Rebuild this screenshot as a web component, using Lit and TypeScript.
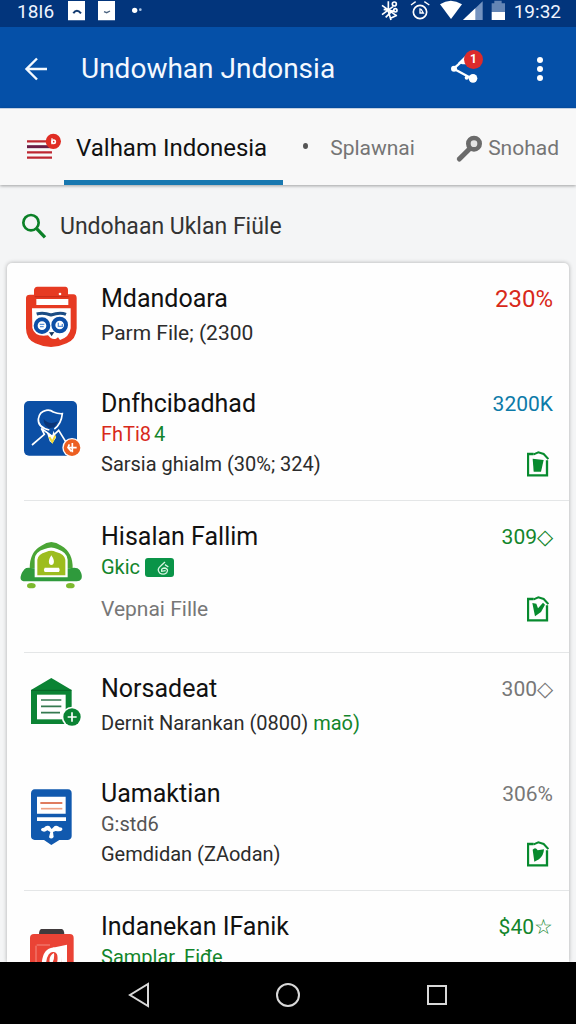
import { LitElement, html, css, svg, nothing, TemplateResult } from "lit";
import { customElement, property } from "lit/decorators.js";
import { classMap } from "lit/directives/class-map.js";

const art: Record<string, TemplateResult> = {
  owl: svg`<svg class="art" viewBox="72 72 171 192" aria-hidden="true">
    <path fill="#e63a22" d="M112 80H196Q204 81 204 90V103H220Q230 104 230 114V205Q229 238 200 250Q153 272 106 250Q78 238 78 205V114Q78 104 90 104H102V90Q103 81 112 80Z"/>
    <path fill="#fff" d="M109 117H205V135H109ZM96 145H212V205Q208 232 180 240L174 232L168 236Q160 238 152 234L144 226Q104 232 97 204Z"/>
    <path fill="#c92d1a" d="M104 108h102v4h-102z"/>
    <circle cx="180" cy="102" r="4" fill="#fff"/>
    <path d="M110 162Q130 156 153 165Q180 155 198 163" fill="none" stroke="#1c4d84" stroke-width="9"/>
    <circle cx="126" cy="197" r="19" fill="#fff" stroke="#0d4fa6" stroke-width="12"/>
    <circle cx="179" cy="195" r="19" fill="#fff" stroke="#0d4fa6" stroke-width="12"/>
    <path d="M119 193h14M120 200h11M175 188v11h12v-7" fill="none" stroke="#5f93d6" stroke-width="4"/>
    <path d="M147 217L155 229L163 216" fill="#17375e"/>
  </svg>`,
  person: svg`<svg class="art" viewBox="72 390 171 192" aria-hidden="true">
    <rect x="72" y="426" width="159" height="164" rx="15" fill="#0b4fa5"/>
    <path d="M148 513Q113 505 115 480Q118 458 138 454Q150 451 160 459Q174 465 187 464Q184 495 163 510" fill="none" stroke="#fff" stroke-width="5"/>
    <path d="M131 480Q148 500 174 487L163 505L146 508Q130 498 131 480Z" fill="#0a3476"/>
    <path d="M96 558L133 526L124 508L157 532L176 514L197 548" fill="none" stroke="#fff" stroke-width="5"/>
    <path d="M139 516L156 532L161 515L168 536L157 553L149 547Z" fill="#fff"/>
    <path d="M148 534L157 549L166 530" fill="none" stroke="#f0d832" stroke-width="6"/>
    <circle cx="216" cy="566" r="29" fill="#fff"/><circle cx="216" cy="566" r="25" fill="#ec5f21"/>
    <path d="M204 566H230M217 552V580M208 556L204 566L214 577" fill="none" stroke="#fff" stroke-width="5"/>
  </svg>`,
  dome: svg`<svg class="art" viewBox="72 99 171 192" aria-hidden="true">
    <path fill="#4aa535" d="M89 238Q89 188 124 170Q154 148 184 170Q219 190 218 238Z"/>
    <path fill="#2f9a3c" d="M74 240Q80 233 100 238H208Q232 233 239 243Q249 260 244 270Q240 277 230 277H76Q64 277 62 270Q60 256 74 240Z"/>
    <path fill="#fff" d="M104 265V210Q106 188 134 180Q154 171 172 180Q202 190 203 212V265Z"/>
    <path fill="#9dbd1f" d="M112 259V212Q114 196 138 189Q154 182 168 189Q194 196 196 212V259Z"/>
    <path fill="#fff" d="M154 199Q166 216 160 225Q154 231 148 225Q143 216 154 199ZM134 236H177Q181 242 177 249H134Q129 243 134 236Z"/>
    <ellipse cx="94" cy="290" rx="13" ry="8" fill="#7db92e"/><ellipse cx="211" cy="290" rx="13" ry="8" fill="#7db92e"/>
  </svg>`,
  house: svg`<svg class="art" viewBox="72 72 171 192" aria-hidden="true">
    <path fill="#0b8334" d="M93 120L154 84L215 120V222H93Z"/>
    <path d="M94 121H214" stroke="#086327" stroke-width="3"/>
    <rect x="111" y="134" width="86" height="74" fill="#fff"/>
    <path d="M123 150H184M123 169H184M123 188H180" stroke="#357a50" stroke-width="5"/>
    <circle cx="216" cy="201" r="31" fill="#fff"/><circle cx="216" cy="201" r="26" fill="#0b8334"/>
    <path d="M203 201H230M216 187V215" stroke="#fff" stroke-width="5"/>
  </svg>`,
  badge: svg`<svg class="art" viewBox="72 60 171 192" aria-hidden="true">
    <path fill="#1159ae" d="M104 91H204Q215 92 215 103V232Q214 242 204 243H178L154 258L132 243H104Q93 242 93 232V103Q94 92 104 91Z"/>
    <path fill="#fff" d="M111 113H197V164H111ZM111 175H198V186H111Z"/>
    <path d="M121 132H187" stroke="#d9623f" stroke-width="5"/><path d="M123 149H187" stroke="#efa184" stroke-width="5"/>
    <path fill="#fff" d="M123 214Q122 207 132 206Q138 198 148 201L155 210L164 201Q174 199 178 205Q188 205 187 212Q184 219 167 216L159 219L161 234Q154 243 147 235L151 219L142 214Q132 222 123 214Z"/>
  </svg>`,
  jar: svg`<svg class="art" viewBox="72 99 171 192" aria-hidden="true">
    <path fill="#403a3c" d="M124 150H185Q193 152 193 168H117Q117 152 124 150Z"/>
    <rect x="90" y="165" width="131" height="150" rx="12" fill="#ea4335"/>
    <path d="M108 200V250M110 198H150" stroke="#f48a80" stroke-width="3"/>
    <path d="M132 250Q136 214 160 212Q184 214 178 250" fill="none" stroke="#fff" stroke-width="13"/>
    <path fill="#fff" d="M158 206L201 197V252H184Q188 220 158 206Z"/>
    <path d="M149 250Q146 230 162 222Q164 238 158 250Z" fill="#fff"/>
  </svg>`,
};

const mark: Record<string, TemplateResult> = {
  cup: svg`<path fill="#078a2e" d="M281 587L314 591L306 626H284Z"/>`,
  check: svg`<path fill="#078a2e" d="M280 585L292 587L297 601L312 584L318 590L306 612L288 625Z"/>`,
  heart: svg`<path fill="#078a2e" d="M281 590Q289 580 296 592L315 589Q314 608 300 619L286 626Z"/>`,
};

interface Item {
  art: string;
  title: string;
  lines: TemplateResult[];
  value: string;
  tone: string;
  mark?: string;
  divided?: boolean;
  spaced?: boolean;
}

const items: Item[] = [
  { art: "owl", title: "Mdandoara", lines: [html`<p class="lead">Parm File; (2300</p>`], value: "230%", tone: "red large" },
  {
    art: "person", title: "Dnfhcibadhad",
    lines: [html`<p class="tag"><span class="red">FhTi8</span><span class="green">4</span></p>`, html`<p>Sarsia ghialm (30%; 324)</p>`],
    value: "3200K", tone: "blue", mark: "cup", divided: true,
  },
  {
    art: "dome", title: "Hisalan Fallim",
    lines: [
      html`<p class="tag green">Gkic
        <svg class="chip" viewBox="0 0 87 57" aria-hidden="true"><rect width="87" height="57" rx="9" fill="#0a9448"/>
          <path d="M60 12L47 24Q34 34 44 45Q55 52 65 44Q72 34 60 30Q48 30 50 40L62 38M60 20L70 27" fill="none" stroke="#d8f5e2" stroke-width="4"/></svg></p>`,
      html`<p class="lead grey">Vepnai Fille</p>`,
    ],
    value: "309◇", tone: "green", mark: "check", divided: true, spaced: true,
  },
  { art: "house", title: "Norsadeat", lines: [html`<p>Dernit Narankan (0800) <span class="green">maō)</span></p>`], value: "300◇", tone: "grey" },
  {
    art: "badge", title: "Uamaktian",
    lines: [html`<p class="tag dim">G:std6</p>`, html`<p>Gemdidan (ZAodan)</p>`],
    value: "306%", tone: "grey", mark: "heart", divided: true,
  },
  { art: "jar", title: "Indanekan IFanik", lines: [html`<p class="tag green">Samplar. Fiđe</p>`], value: "$40☆", tone: "green" },
];

@customElement("file-row")
class FileRow extends LitElement {
  @property({ attribute: false }) item!: Item;

  static styles = css`
    :host { display: block; }
    .row { display: flex; gap: 20px; margin-left: 17px; padding: 21px 16px 21px 0; }
    .row.divided { border-bottom: 1px solid #e4e6e7; }
    .row.spaced { padding-bottom: 28px; }
    .row.pair { padding-bottom: 20px; }
    .art { flex: none; width: 57px; height: 64px; overflow: visible; }
    .body { flex: 1; min-width: 0; white-space: nowrap; }
    h2, p { margin: 0; font-weight: 400; line-height: 30px; }
    h2 { font-size: 25px; color: #111; }
    p { font-size: 20px; color: #2c2c2c; }
    p.lead { font-size: 21px; }
    .pair p { margin-top: 4px; }
    .spaced p:last-child { margin-top: 12px; }
    .tag { display: flex; align-items: center; gap: 3px; }
    .side { display: flex; flex-direction: column; align-items: flex-end; justify-content: space-between; }
    .value { font-size: 21px; line-height: 30px; }
    .value.large { font-size: 24px; }
    .file { display: block; width: 22px; height: 30px; margin-right: 4px; padding: 0; border: 0; background: none; }
    .file svg { display: block; width: 22px; height: 30px; }
    .chip { width: 29px; height: 19px; margin-left: 2px; }
    .red { color: #d8291a; }
    .blue { color: #0d7aa8; }
    p.green, .green { color: #12852b; }
    p.grey, .grey { color: #777; }
    p.dim { color: #555; }
  `;

  render() {
    const it = this.item;
    return html`<div class=${classMap({ row: true, divided: !!it.divided, spaced: !!it.spaced, pair: it.lines.length === 1 && it.art !== "jar" })}>
      ${art[it.art]}
      <div class="body"><h2>${it.title}</h2>${it.lines}</div>
      <div class="side">
        <span class="value ${it.tone}">${it.value}</span>
        ${it.mark
          ? html`<button class="file" aria-label="Open file"><svg viewBox="264 558 66 90" aria-hidden="true">
              <path d="M284 573H267V637H324V592" fill="none" stroke="#078a2e" stroke-width="7"/>
              <path d="M284 574L298 568L314 573L328 588" fill="none" stroke="#078a2e" stroke-width="6"/>
              ${mark[it.mark]}</svg></button>`
          : nothing}
      </div>
    </div>`;
  }
}

@customElement("app-root")
class AppRoot extends LitElement {
  static styles = css`
    :host {
      display: flex; flex-direction: column; height: 100vh; overflow: hidden;
      font-family: Roboto, "Liberation Sans", sans-serif; background: #f4f5f6; color: #111;
    }
    button { font: inherit; color: inherit; background: none; border: 0; padding: 0; margin: 0; }
    svg { display: block; overflow: visible; }
    .status {
      flex: none; display: flex; justify-content: space-between; height: 27px; padding: 0 15px 0 17px;
      background: #02357c; color: #eef4ff; font-size: 19px; line-height: 24px;
    }
    .group { display: flex; }
    .left-icons { width: 75px; height: 24px; margin-left: 14px; }
    .right-icons { width: 126px; height: 24px; margin-right: 7px; }
    .bar { flex: none; display: flex; align-items: center; height: 81px; padding: 2px 24px 0; box-sizing: border-box; background: #0550a8; color: #f4f9ff; }
    .bar h1 { flex: 1; margin: 0 0 0 33px; font-size: 28px; line-height: 40px; font-weight: 400; white-space: nowrap; }
    .back { width: 24px; height: 24px; }
    .share { position: relative; width: 28px; height: 30px; margin-right: 49px; }
    .count { position: absolute; top: -4px; right: -4px; width: 19px; height: 19px; border-radius: 50%; background: #dc2b2b; color: #fff; font-size: 12px; line-height: 19px; text-align: center; font-weight: 700; }
    .more { width: 24px; height: 30px; }
    .more svg { margin: 0 auto; }
    .tabs { flex: none; display: flex; height: 77px; padding: 0 17px 0 26px; box-sizing: border-box; background: #f8f8f8; border-top: 1px solid #c3d0e2; box-shadow: 0 1px 3px rgba(0, 0, 0, 0.35); white-space: nowrap; }
    .tab { display: flex; align-items: center; height: 76px; padding-top: 2px; box-sizing: border-box; font-size: 21px; color: #757575; }
    .tab.active { font-size: 24px; color: #111; padding: 6px 16px 0 12px; border-bottom: 5px solid #1878b0; }
    .menu { width: 38px; padding: 0; }
    .dot { width: 5px; height: 6px; margin: 34px 22px 0 20px; border-radius: 50%; background: #555; }
    .tab.last { margin-left: auto; gap: 6px; }
    .search { flex: none; display: flex; align-items: center; gap: 14px; height: 78px; padding: 3px 22px 0; box-sizing: border-box; }
    .search input { flex: 1; min-width: 0; padding: 2px 0 0; border: 0; outline: 0; background: none; font: 23px/32px Roboto, "Liberation Sans", sans-serif; color: #333; }
    .list { flex: 1; min-height: 0; overflow: hidden; margin: 0 7px; background: #fefefe; border-radius: 5px 5px 0 0; box-shadow: 0 0 4px rgba(0, 0, 0, 0.3); }
    .nav { flex: none; position: relative; display: flex; justify-content: space-around; align-items: center; height: 62px; padding: 3px 64px 0; box-sizing: border-box; background: #000; }
    .nav button { width: 48px; height: 48px; display: grid; place-items: center; }
  `;

  render() {
    return html`
      <div class="status">
        <div class="group">
          <span>18I6</span>
          <svg class="left-icons" viewBox="204 0 225 72" aria-hidden="true">
            <path fill="#fff" d="M204 3H255V61H204ZM294 3H345V61H294Z"/>
            <path d="M220 40Q230 24 243 40" fill="none" stroke="#123a70" stroke-width="6"/>
            <path d="M312 35L320 38L330 33" fill="none" stroke="#4b6480" stroke-width="4"/>
            <circle cx="404" cy="31" r="8" fill="#fff"/><circle cx="421" cy="29" r="4" fill="#aac4e4"/>
          </svg>
        </div>
        <div class="group">
          <svg class="right-icons" viewBox="282 0 378 72" aria-hidden="true">
            <g fill="none" stroke="#fff" stroke-width="5">
              <path d="M285 16L327 46M285 44L318 20M304 4V34L312 60M290 28L322 34M296 52L314 34"/>
              <circle cx="322" cy="12" r="6"/><circle cx="325" cy="31" r="5"/><path d="M312 54L330 46"/>
              <circle cx="399" cy="36" r="20"/><path d="M372 15L386 5M412 5L427 15M399 25V39H409L402 27" stroke-width="4"/>
            </g>
            <path fill="#fff" d="M459 13Q491 -8 525 13L492 57Z"/>
            <path fill="#7593c0" d="M587 4V60H528Z"/><path fill="#fff" d="M565 25V60H528Z"/>
            <path fill="#6485b4" d="M622 2H644V10H654V36H614V10H622Z"/><path fill="#fff" d="M614 36H654V60H614Z"/>
          </svg>
          <span>19:32</span>
        </div>
      </div>
      <header class="bar">
        <button class="back" aria-label="Back"><svg width="24" height="24" viewBox="0 0 24 24" fill="none" stroke="#f4f9ff" stroke-width="2.4"><path d="M23 12H3M13 1.500L2.500 12L13 22.500"/></svg></button>
        <h1>Undowhan Jndonsia</h1>
        <button class="share" aria-label="Share">
          <svg width="28" height="30" viewBox="489 165 84 90" fill="#fff" aria-hidden="true">
            <path d="M497 209L532 178M497 209L554 240" stroke="#fff" stroke-width="7"/>
            <circle cx="498" cy="209" r="9"/><circle cx="555" cy="238" r="13"/><circle cx="536" cy="236" r="6"/>
            <path d="M510 192L534 168L540 196L524 196Z"/>
          </svg>
          <span class="count">1</span>
        </button>
        <button class="more" aria-label="More options"><svg width="8" height="26" viewBox="0 0 8 26" fill="#fff"><circle cx="4" cy="4" r="3"/><circle cx="4" cy="13" r="3"/><circle cx="4" cy="22" r="3"/></svg></button>
      </header>
      <nav class="tabs">
        <button class="tab menu" aria-label="Menu">
          <svg width="36" height="30" viewBox="78 58 108 90" aria-hidden="true">
            <path d="M81 86H156M81 119H156M81 135H156" stroke="#bd2630" stroke-width="7"/>
            <path d="M81 102H150" stroke="#6a1c46" stroke-width="9"/>
            <circle cx="160" cy="86" r="23" fill="#e02d24"/>
            <circle cx="161" cy="87" r="5" fill="none" stroke="#fff" stroke-width="5"/><path d="M156 77v18" stroke="#fff" stroke-width="4"/>
          </svg>
        </button>
        <button class="tab active">Valham Indonesia</button>
        <span class="dot"></span>
        <button class="tab">Splawnai</button>
        <button class="tab last">
          <svg width="25" height="26" viewBox="502 76 75 78" fill="none" stroke="#6b6b6b" aria-hidden="true">
            <circle cx="553" cy="102" r="17" stroke-width="14" fill="#e4e4e4"/><path d="M540 117L509 148" stroke-width="15" stroke-linecap="round"/>
          </svg>
          Snohad
        </button>
      </nav>
      <label class="search">
        <svg width="24" height="24" viewBox="66 309 72 72" fill="none" stroke="#0b8027" aria-hidden="true">
          <circle cx="93" cy="335" r="23" stroke-width="8"/><path d="M110 353L135 379" stroke-width="10"/>
        </svg>
        <input type="text" aria-label="Search files" .value=${"Undohaan Uklan Fiüle"} />
      </label>
      <main class="list">${items.map((item) => html`<file-row .item=${item}></file-row>`)}</main>
      <footer class="nav">
        <button aria-label="Back"><svg width="22" height="26" viewBox="0 0 22 26" fill="none" stroke="#d8d8d8" stroke-width="2"><path d="M20 2V24L2 13Z"/></svg></button>
        <button aria-label="Home"><svg width="24" height="24" viewBox="0 0 24 24" fill="none" stroke="#d8d8d8" stroke-width="2"><circle cx="12" cy="12" r="11"/></svg></button>
        <button aria-label="Recent apps"><svg width="20" height="20" viewBox="0 0 20 20" fill="none" stroke="#d8d8d8" stroke-width="2"><path d="M1 1H19V19H1Z"/></svg></button>
      </footer>
    `;
  }
}
